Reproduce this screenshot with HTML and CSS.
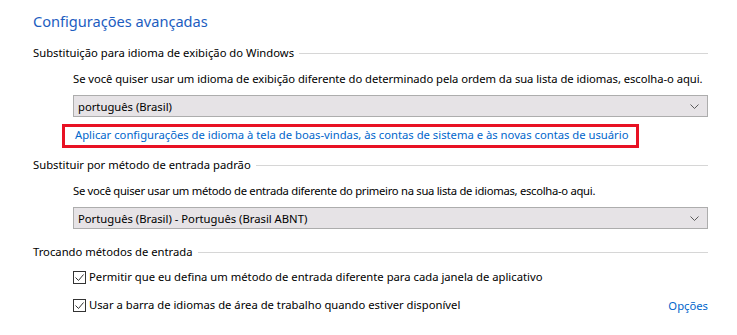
FILE: index.html
```html
<!DOCTYPE html>
<html lang="pt-BR">
<head>
<meta charset="utf-8">
<link rel="stylesheet" href="styles.css">
</head>
<body>
<div class="page">
  <h1 class="title">Configurações avançadas</h1>

  <div class="group-head g1"><span>Substituição para idioma de exibição do Windows</span><span class="rule"></span></div>
  <div class="indent">
    <p class="desc desc-a">Se você quiser usar um idioma de exibição diferente do determinado pela ordem da sua lista de idiomas, escolha-o aqui.</p>
    <div class="select"><span>português (Brasil)</span><svg class="chev" width="9" height="5" viewBox="0 0 9 5"><path d="M0.5 0.5 L4.5 4.5 L8.5 0.5" fill="none" stroke="#5a5a5a" stroke-width="1"/></svg></div>
  </div>
  <div class="mark"><a class="link">Aplicar configurações de idioma à tela de boas-vindas, às contas de sistema e às novas contas de usuário</a></div>

  <div class="group-head g2"><span>Substituir por método de entrada padrão</span><span class="rule"></span></div>
  <div class="indent">
    <p class="desc desc-b">Se você quiser usar um método de entrada diferente do primeiro na sua lista de idiomas, escolha-o aqui.</p>
    <div class="select"><span>Português (Brasil) - Português (Brasil ABNT)</span><svg class="chev" width="9" height="5" viewBox="0 0 9 5"><path d="M0.5 0.5 L4.5 4.5 L8.5 0.5" fill="none" stroke="#5a5a5a" stroke-width="1"/></svg></div>
  </div>

  <div class="group-head g3"><span>Trocando métodos de entrada</span><span class="rule"></span></div>
  <div class="indent checks">
    <label class="check"><span class="box"><svg width="11" height="11" viewBox="0 0 11 11"><path d="M1.5 5.5 L4.5 8.5 L9.5 2.5" fill="none" stroke="#333" stroke-width="1"/></svg></span>Permitir que eu defina um método de entrada diferente para cada janela de aplicativo</label>
    <div class="check-row">
      <label class="check"><span class="box"><svg width="11" height="11" viewBox="0 0 11 11"><path d="M1.5 5.5 L4.5 8.5 L9.5 2.5" fill="none" stroke="#333" stroke-width="1"/></svg></span>Usar a barra de idiomas de área de trabalho quando estiver disponível</label>
      <a class="link">Opções</a>
    </div>
  </div>
</div>
</body>
</html>
```

FILE: styles.css
```css
html, body {
  margin: 0;
  padding: 0;
  background: #ffffff;
}
.page {
  width: 675px;
  padding: 0 29px 0 33px;
  font-family: "Noto Sans", "Open Sans", sans-serif;
  font-size: 11.25px;
  color: #000;
}
.title {
  margin: 0;
  padding-top: 8px;
  height: 26px;
  font-size: 14.6px;
  font-weight: normal;
  line-height: 26px;
  color: #1c5dbf;
}
.group-head {
  display: flex;
  align-items: center;
  height: 16px;
  line-height: 16px;
}
.group-head .rule {
  flex: 1;
  height: 1px;
  background: #d6d6d6;
  margin-left: 5px;
}
.group-head.g1 { margin-top: 11px; }
.group-head.g2 { margin-top: 9px; }
.group-head.g3 { margin-top: 15px; }
.indent {
  margin-left: 40px;
}
.desc {
  margin: 10px 0 0;
  line-height: 16px;
  white-space: nowrap;
}
.desc-a { letter-spacing: -0.05px; }
.desc-b { letter-spacing: -0.29px; }
.select {
  display: flex;
  align-items: center;
  justify-content: space-between;
  box-sizing: border-box;
  height: 22px;
  margin-top: 8px;
  padding: 0 8px 0 4px;
  background: #e6e3e6;
  border: 1px solid #adadad;
}
.mark {
  display: inline-block;
  margin: 7px 0 0 29px;
  padding: 0 8px 2px 10px;
  border: 3px solid #e81123;
  line-height: 16px;
}
.link {
  color: #0066cc;
  cursor: pointer;
}
.checks {
  margin-top: 9px;
}
.check {
  display: flex;
  align-items: center;
  height: 16px;
  line-height: 16px;
}
.check-row {
  display: flex;
  align-items: center;
  justify-content: space-between;
  margin-top: 12px;
}
.box {
  box-sizing: border-box;
  width: 13px;
  height: 13px;
  border: 1px solid #333;
  margin-right: 3px;
  display: flex;
  align-items: center;
  justify-content: center;
}
.box svg { display: block; }
```
